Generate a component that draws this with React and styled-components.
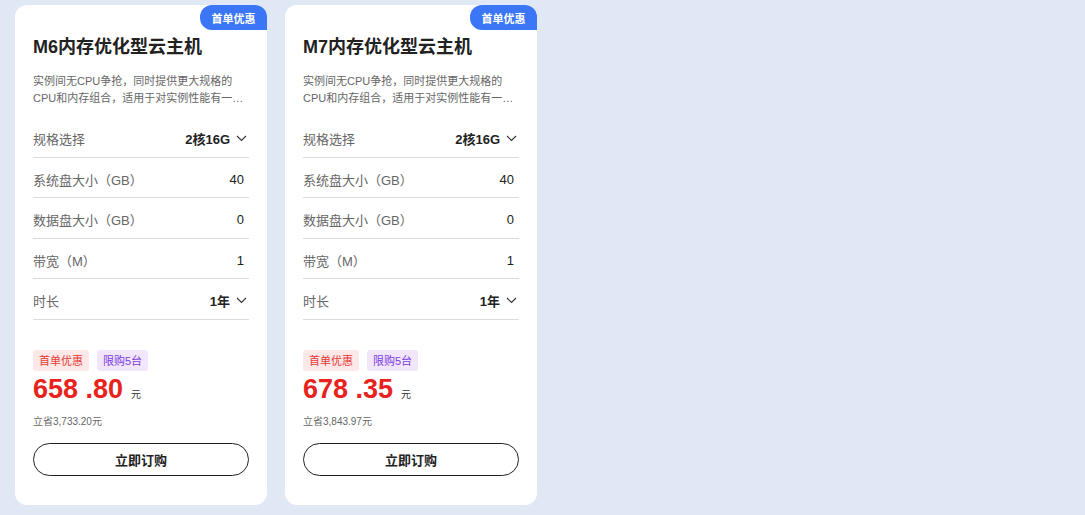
import React from "react";
import styled, { createGlobalStyle } from "styled-components";

const GlobalStyle = createGlobalStyle`
  html, body {
    margin: 0;
    padding: 0;
    background: #e1e8f5;
    font-family: "Liberation Sans", "Noto Sans CJK SC", sans-serif;
  }
`;

const Page = styled.div`
  display: flex;
  align-items: flex-start;
  gap: 18px;
  padding: 5px 15px;
  min-height: 515px;
  box-sizing: border-box;
`;

const Card = styled.div`
  position: relative;
  width: 252px;
  box-sizing: border-box;
  background: #fff;
  border-radius: 12px;
  padding: 29px 18px 29px;
`;

const Badge = styled.div`
  position: absolute;
  top: 0;
  right: 0;
  width: 67px;
  height: 25px;
  background: #3b76f6;
  color: #fff;
  font-size: 11px;
  font-weight: bold;
  display: flex;
  align-items: center;
  justify-content: center;
  border-radius: 12px 12px 0 12px;
`;

const Title = styled.h2`
  margin: 0;
  font-size: 18px;
  line-height: 27px;
  font-weight: bold;
  color: #222;
`;

const Desc = styled.p`
  margin: 12px 0 0;
  font-size: 11px;
  line-height: 17px;
  color: #666;
  display: -webkit-box;
  -webkit-line-clamp: 2;
  -webkit-box-orient: vertical;
  overflow: hidden;
`;

const Specs = styled.div`
  margin-top: 10px;
`;

const Row = styled.div`
  display: flex;
  align-items: center;
  justify-content: space-between;
  height: 40.5px;
  box-sizing: border-box;
  padding: 4px ${(p) => (p.$select ? "2px" : "5px")} 0 0;
  border-bottom: 1px solid #dcdcdc;
  font-size: 13px;
`;

const Label = styled.span`
  color: #666;
`;

const Value = styled.span`
  display: flex;
  align-items: center;
  gap: 6px;
  color: #222;
  font-weight: ${(p) => (p.$bold ? "bold" : "normal")};
`;

const Tags = styled.div`
  display: flex;
  gap: 8px;
  margin-top: 30px;
`;

const Tag = styled.span`
  height: 21px;
  padding: 0 6px;
  display: flex;
  align-items: center;
  border-radius: 3px;
  font-size: 11px;
  color: ${(p) => (p.$purple ? "#7a3fe0" : "#e53a35")};
  background: ${(p) => (p.$purple ? "#f2e6fd" : "#fde8e8")};
`;

const Price = styled.div`
  margin-top: 3px;
  font-size: 27px;
  line-height: 30px;
  font-weight: bold;
  color: #e8231d;
`;

const Unit = styled.span`
  margin-left: 8px;
  font-size: 10px;
  font-weight: normal;
  color: #333;
`;

const Save = styled.div`
  margin-top: 5px;
  font-size: 10px;
  line-height: 14px;
  color: #666;
`;

const Button = styled.button`
  display: block;
  margin-top: 14px;
  width: 100%;
  height: 33px;
  border: 1px solid #222;
  border-radius: 17px;
  background: #fff;
  font-family: inherit;
  font-size: 13px;
  font-weight: bold;
  color: #222;
  cursor: pointer;
`;

const Chevron = () => (
  <svg width="11" height="7" viewBox="0 0 11 7">
    <path d="M1 1l4.5 4.5L10 1" fill="none" stroke="#333" strokeWidth="1.1" />
  </svg>
);

const products = [
  { name: "M6内存优化型云主机", price: "658 .80", save: "3,733.20" },
  { name: "M7内存优化型云主机", price: "678 .35", save: "3,843.97" },
];

function ProductCard({ item }) {
  return (
    <Card>
      <Badge>首单优惠</Badge>
      <Title>{item.name}</Title>
      <Desc>实例间无CPU争抢，同时提供更大规格的CPU和内存组合，适用于对实例性能有一定要求的内存密集型业务场景</Desc>
      <Specs>
        <Row $select>
          <Label>规格选择</Label>
          <Value $bold>2核16G<Chevron /></Value>
        </Row>
        <Row>
          <Label>系统盘大小（GB）</Label>
          <Value>40</Value>
        </Row>
        <Row>
          <Label>数据盘大小（GB）</Label>
          <Value>0</Value>
        </Row>
        <Row>
          <Label>带宽（M）</Label>
          <Value>1</Value>
        </Row>
        <Row $select>
          <Label>时长</Label>
          <Value $bold>1年<Chevron /></Value>
        </Row>
      </Specs>
      <Tags>
        <Tag>首单优惠</Tag>
        <Tag $purple>限购5台</Tag>
      </Tags>
      <Price>
        {item.price}
        <Unit>元</Unit>
      </Price>
      <Save>立省{item.save}元</Save>
      <Button>立即订购</Button>
    </Card>
  );
}

export default function App() {
  return (
    <>
      <GlobalStyle />
      <Page>
        {products.map((p) => (
          <ProductCard key={p.name} item={p} />
        ))}
      </Page>
    </>
  );
}
